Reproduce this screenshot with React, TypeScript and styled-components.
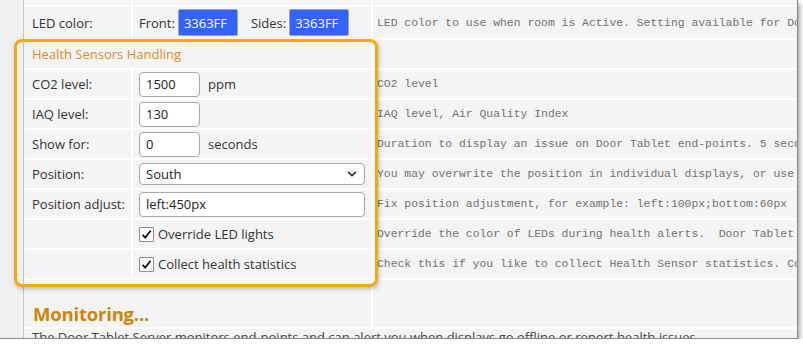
import React from 'react';
import styled, { createGlobalStyle } from 'styled-components';
import { ChevronDown } from 'lucide-react';

const GlobalStyle = createGlobalStyle`
    html, body {
        margin: 0;
        padding: 0;
        background: #ffffff;
    }
    * {
        box-sizing: border-box;
    }
`;

const Frame = styled.div`
    position: relative;
    width: 798px;
    height: 339px;
    overflow: hidden;
    display: flex;
    background: #efefef;
    border-right: 1px solid #8a8a8a;
    border-bottom: 1px solid #8a8a8a;
    box-shadow: 2px 3px 4px rgba(0, 0, 0, 0.35);
    font-family: 'Open Sans', 'Noto Sans', sans-serif;
    font-size: 13px;
    color: #333;
`;

const Gutter = styled.div`
    width: 24px;
    flex: none;
    background: #f0f0f0;
    border-right: 1px solid #c4c4c4;
`;

const Table = styled.div`
    flex: 1;
    display: grid;
    grid-template-columns: 107px 238px 1fr;
    grid-template-rows: 5px 31px repeat(8, 28px) 47px 30px;
    gap: 2px;
    background: #ffffff;
    align-content: start;
`;

const Cell = styled.div<{ $span?: number }>`
    background: #f4f4f4;
    display: flex;
    align-items: center;
    gap: 8px;
    padding: 0 6px;
    white-space: nowrap;
    overflow: hidden;
    grid-column: ${({ $span }) => ($span ? `span ${$span}` : 'auto')};
`;

const Label = styled(Cell)`
    padding-left: 8px;
`;

const Desc = styled(Cell)`
    padding-left: 4px;
    font-family: 'Liberation Mono', 'DejaVu Sans Mono', monospace;
    font-size: 11.4px;
    color: #727272;
    white-space: pre;
`;

const SectionTitle = styled(Cell)`
    padding-left: 8px;
    color: #dc8b2c;
`;

const Heading = styled(Cell)`
    padding: 20px 0 0 9px;
    font-size: 18.5px;
    font-weight: 700;
    color: #d0850a;
    letter-spacing: -0.2px;
`;

const Para = styled(Cell)`
    align-items: flex-start;
    padding: 0 8px;
    line-height: 16px;
    color: #444;
`;

const LedGroup = styled(Cell)`
    gap: 3px;
`;

const ColorBox = styled.span`
    display: inline-flex;
    align-items: center;
    width: 60px;
    height: 27px;
    padding-left: 5px;
    background: #3363ff;
    color: #ffffff;
    border: 1px solid #9aa3b8;
    border-radius: 2px;
`;

const Sub = styled.span`
    margin-left: 10px;
`;

const TextInput = styled.div<{ $wide?: boolean }>`
    display: flex;
    align-items: center;
    width: ${({ $wide }) => ($wide ? '230px' : '61px')};
    height: 25px;
    padding-left: 6px;
    background: #ffffff;
    border: 1px solid #a9a9a9;
    border-radius: 4px;
    color: #222;
`;

const Select = styled.div`
    display: flex;
    align-items: center;
    justify-content: space-between;
    width: 230px;
    height: 22px;
    padding: 0 5px 0 6px;
    background: #ffffff;
    border: 1px solid #a9a9a9;
    border-radius: 4px;
    color: #222;
`;

const Check = styled.span`
    display: inline-flex;
    align-items: center;
    justify-content: center;
    width: 15px;
    height: 15px;
    background: #ffffff;
    border: 1px solid #8d8d8d;
    border-radius: 1px;
    margin-right: -4px;
`;

const Highlight = styled.div`
    position: absolute;
    left: 14px;
    top: 39px;
    width: 364px;
    height: 248px;
    border: 3px solid #f6a90f;
    border-radius: 8px;
    box-shadow: 1px 2px 4px rgba(0, 0, 0, 0.25);
    pointer-events: none;
`;

const CheckMark = () => (
    <svg width='11' height='11' viewBox='0 0 11 11'>
        <path d='M1.5 5.8 L4.2 8.6 L9.6 1.8' fill='none' stroke='#111' strokeWidth='1.8' />
    </svg>
);

type Row = { label: string; value: React.ReactNode; desc: string };

const rows: Row[] = [
    {
        label: 'CO2 level:',
        value: (<><TextInput>1500</TextInput><span>ppm</span></>),
        desc: 'CO2 level',
    },
    {
        label: 'IAQ level:',
        value: <TextInput>130</TextInput>,
        desc: 'IAQ level, Air Quality Index',
    },
    {
        label: 'Show for:',
        value: (<><TextInput>0</TextInput><span>seconds</span></>),
        desc: 'Duration to display an issue on Door Tablet end-points. 5 seconds minimum.',
    },
    {
        label: 'Position:',
        value: (<Select><span>South</span><ChevronDown size={14} strokeWidth={2.6} color='#222' /></Select>),
        desc: 'You may overwrite the position in individual displays, or use the default.',
    },
    {
        label: 'Position adjust:',
        value: <TextInput $wide>left:450px</TextInput>,
        desc: 'Fix position adjustment, for example: left:100px;bottom:60px',
    },
    {
        label: '',
        value: (<><Check><CheckMark /></Check><span>Override LED lights</span></>),
        desc: 'Override the color of LEDs during health alerts.  Door Tablet will restore colors.',
    },
    {
        label: '',
        value: (<><Check><CheckMark /></Check><span>Collect health statistics</span></>),
        desc: 'Check this if you like to collect Health Sensor statistics. Collected data is kept.',
    },
];

export default function App() {
    return (
        <>
            <GlobalStyle />
            <Frame>
                <Gutter />
                <Table>
                    <Cell />
                    <Cell />
                    <Desc />

                    <Label>LED color:</Label>
                    <LedGroup>
                        <span>Front:</span>
                        <ColorBox>3363FF</ColorBox>
                        <Sub>Sides:</Sub>
                        <ColorBox>3363FF</ColorBox>
                    </LedGroup>
                    <Desc>LED color to use when room is Active. Setting available for Door Tablet hardware only.</Desc>

                    <SectionTitle $span={2}>Health Sensors Handling</SectionTitle>
                    <Desc />

                    {rows.map((r, i) => (
                        <React.Fragment key={i}>
                            <Label>{r.label}</Label>
                            <Cell>{r.value}</Cell>
                            <Desc>{r.desc}</Desc>
                        </React.Fragment>
                    ))}

                    <Heading $span={2}>Monitoring...</Heading>
                    <Desc />

                    <Para $span={3}>
                        The Door Tablet Server monitors end-points and can alert you when displays go offline or report health issues.
                    </Para>
                </Table>
                <Highlight />
            </Frame>
        </>
    );
}
